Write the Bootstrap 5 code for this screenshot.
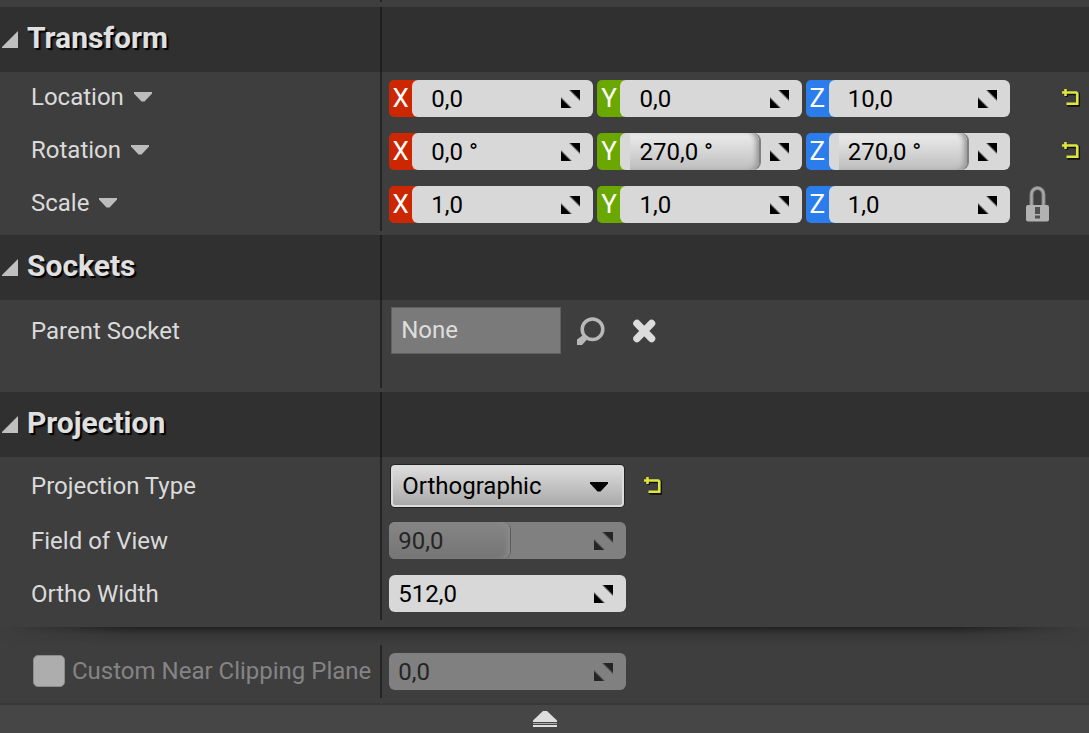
<!DOCTYPE html>
<html lang="en">
<head>
<meta charset="utf-8">
<meta name="viewport" content="width=device-width, initial-scale=1">
<title>Details</title>
<link href="https://cdn.jsdelivr.net/npm/bootstrap@5.3.0/dist/css/bootstrap.min.css" rel="stylesheet">
<style>
  body { background: #3e3e3e; color: #dadada; font-family: Roboto, sans-serif; font-size: 24px; line-height: 32px; }
  svg { display: block; }
  .strip { height: 7px; }
  .name-cell { flex: 0 0 35.1%; min-width: 0; border-right: 2px solid #242424; padding-left: 31px; white-space: nowrap; }
  .strip .name-cell { width: 35.1%; height: 2px; }
  .value-cell { flex: 1 1 0; min-width: 0; padding-left: 7px; }
  .prop { min-height: 53px; }
  .prop.tall { min-height: 88px; }
  .prop.combo { min-height: 57px; }
  .vector .name-cell { gap: 10px; padding-bottom: 3px; }
  .vector .name-cell button { color: #bcbcbc; }
  .group-head { background: #303030; height: 65px; }
  .group-head .name-cell { padding-left: 2px; border-color: #1f1f1f; }
  .group-head h2 { font-size: 30px; line-height: 40px; font-weight: 700; text-shadow: 2px 2px 1px #000; margin: 0 0 3px 9px; color: #e0e0e0; }
  .group-gap { padding-bottom: 4px; }
  .flat { background: none; border: 0; padding: 0; color: inherit; }

  .axis { flex: 1 1 0; min-width: 0; border-radius: 5px; color: #fff; }
  .axis > label { flex: 0 0 23px; line-height: 37px; font-size: 26px; text-align: center; }
  .axis-x { background: linear-gradient(to right, #cc2700 40px, transparent 40px); }
  .axis-y { background: linear-gradient(to right, #6aa700 40px, transparent 40px); }
  .axis-z { background: linear-gradient(to right, #2c7dec 40px, transparent 40px); }
  .spin { position: relative; height: 37px; background: #d8d8d8; border-radius: 6px; overflow: hidden; color: #000; }
  .axis .spin { flex: 1 1 0; min-width: 0; }
  .spin input { position: relative; width: 100%; height: 37px; background: none; border: 0; padding: 0 40px 0 9px; color: inherit; outline: 0; }
  .axis .spin input { padding-left: 19px; }
  .spin svg { position: absolute; right: 13px; top: 10px; }
  .spin-single { width: 237px; }
  .spin-off { background: #808080; color: #252525; }
  .track { position: absolute; inset: 0; }
  .axis .track { left: 10px; }
  .fill { height: 100%; border-radius: 0 8px 8px 0; background: linear-gradient(#ececec, #d8d8d8 45%, #bdbdbd); box-shadow: inset -5px 0 5px -2px #999, 2px 0 0 #808080; }
  .spin-off .fill { background: linear-gradient(#868686, #7e7e7e 45%, #757575); box-shadow: inset -5px 0 5px -2px #8a8a8a, 1px 0 0 #5c5c5c; }
  .side { flex: 0 0 79px; padding: 0 8px 2px 15px; }

  .socket-box { width: 170px; height: 47px; background: #7a7a7a; border: 1px solid #606060; border-radius: 0; padding: 0 9px 2px; color: #dedede; outline: 0; }
  .value-cell .socket-line { padding-left: 2px; }
  .socket-row { padding-top: 7px; }
  .socket-row.name-cell { padding-top: 15px; }
  .combo-box { position: relative; width: 233px; margin-left: 2px; }
  .combo-box select { appearance: none; width: 100%; height: 42px; padding: 0 40px 0 9px; color: #000; border: 2px solid #dcdcdc; border-radius: 4px; background: linear-gradient(#dcdcdc, #c6c6c6 45%, #a9a9a9); box-shadow: 0 0 0 1px #242424; outline: 0; }
  .combo-box svg { position: absolute; right: 16px; top: 17px; }
  .combo-reset { margin-left: 19px; }

  .advanced { padding-top: 18px; padding-bottom: 5px; position: relative; }
  .advanced::before { content: ""; position: absolute; inset: 0 0 auto 0; height: 18px; background: linear-gradient(#222, rgba(46,46,46,.5) 40%, rgba(62,62,62,0)); -webkit-mask-image: linear-gradient(to right, transparent, #000 12%, #000 88%, transparent); mask-image: linear-gradient(to right, transparent, #000 12%, #000 88%, transparent); }
  .advanced .name-cell { padding-bottom: 2px; }
  .check-off { appearance: none; width: 32px; height: 32px; background: #adadad; border: 1px solid #8c8c8c; border-radius: 5px; margin: 0 7px 0 2px; flex: none; }
  .label-off { color: #848484; }
  .foot { height: 30px; background: #464646; border: 0; border-top: 2px solid #383838; padding: 0; }
</style>
</head>
<body>
<svg width="0" height="0" class="position-absolute" aria-hidden="true">
  <symbol id="i-spin" viewBox="0 0 19 18"><path d="M8 0H19V11zM0 7V18H11z" fill="currentColor" opacity=".55"/><path d="M9.500 0H19V9.500zM0 8.500V18H9.500z" fill="currentColor"/></symbol>
  <symbol id="i-down" viewBox="0 0 18 10"><path d="M0 0H18V1.500L10.500 9.500H7.500L0 1.500z" fill="currentColor"/></symbol>
  <symbol id="i-open" viewBox="0 0 16 17"><path d="M16 0V17H0V16z" fill="#c0c0c0"/></symbol>
  <symbol id="i-reset" viewBox="0 0 20 20">
    <g fill="none"><path d="M2.500 6H17.800V17.500H6.500M5.700 2.500V9" stroke="#111" stroke-width="2.500"/>
    <path d="M1 4.500H15.300L16.300 5.500V15.700H5.500M4.500 1V8" stroke="#dfe63a" stroke-width="2.600"/></g>
  </symbol>
</svg>

<div class="strip"><div class="name-cell"></div></div>

<section class="group-gap">
  <div class="group-head d-flex">
    <div class="name-cell d-flex align-items-center">
      <button class="flat" aria-label="Collapse Transform"><svg width="16" height="17"><use href="#i-open"/></svg></button>
      <h2>Transform</h2>
    </div>
  </div>

  <div class="prop vector d-flex">
    <div class="name-cell d-flex align-items-center"><span>Location</span><button class="flat" aria-label="Location options"><svg width="18" height="10"><use href="#i-down"/></svg></button></div>
    <div class="value-cell d-flex align-items-center">
      <div class="d-flex gap-1 flex-grow-1">
        <div class="axis axis-x d-flex"><label for="lx">X</label><div class="spin"><input id="lx" type="text" value="0,0"><svg width="19" height="18"><use href="#i-spin"/></svg></div></div>
        <div class="axis axis-y d-flex"><label for="ly">Y</label><div class="spin"><input id="ly" type="text" value="0,0"><svg width="19" height="18"><use href="#i-spin"/></svg></div></div>
        <div class="axis axis-z d-flex"><label for="lz">Z</label><div class="spin"><input id="lz" type="text" value="10,0"><svg width="19" height="18"><use href="#i-spin"/></svg></div></div>
      </div>
      <div class="side d-flex justify-content-end"><button class="flat" aria-label="Reset location"><svg width="20" height="20"><use href="#i-reset"/></svg></button></div>
    </div>
  </div>

  <div class="prop vector d-flex">
    <div class="name-cell d-flex align-items-center"><span>Rotation</span><button class="flat" aria-label="Rotation options"><svg width="18" height="10"><use href="#i-down"/></svg></button></div>
    <div class="value-cell d-flex align-items-center">
      <div class="d-flex gap-1 flex-grow-1">
        <div class="axis axis-x d-flex"><label for="rx">X</label><div class="spin"><input id="rx" type="text" value="0,0 °"><svg width="19" height="18"><use href="#i-spin"/></svg></div></div>
        <div class="axis axis-y d-flex"><label for="ry">Y</label><div class="spin"><div class="track"><div class="fill" style="width:75%"></div></div><input id="ry" type="text" value="270,0 °"><svg width="19" height="18"><use href="#i-spin"/></svg></div></div>
        <div class="axis axis-z d-flex"><label for="rz">Z</label><div class="spin"><div class="track"><div class="fill" style="width:75%"></div></div><input id="rz" type="text" value="270,0 °"><svg width="19" height="18"><use href="#i-spin"/></svg></div></div>
      </div>
      <div class="side d-flex justify-content-end"><button class="flat" aria-label="Reset rotation"><svg width="20" height="20"><use href="#i-reset"/></svg></button></div>
    </div>
  </div>

  <div class="prop vector d-flex">
    <div class="name-cell d-flex align-items-center"><span>Scale</span><button class="flat" aria-label="Scale options"><svg width="18" height="10"><use href="#i-down"/></svg></button></div>
    <div class="value-cell d-flex align-items-center">
      <div class="d-flex gap-1 flex-grow-1">
        <div class="axis axis-x d-flex"><label for="sx">X</label><div class="spin"><input id="sx" type="text" value="1,0"><svg width="19" height="18"><use href="#i-spin"/></svg></div></div>
        <div class="axis axis-y d-flex"><label for="sy">Y</label><div class="spin"><input id="sy" type="text" value="1,0"><svg width="19" height="18"><use href="#i-spin"/></svg></div></div>
        <div class="axis axis-z d-flex"><label for="sz">Z</label><div class="spin"><input id="sz" type="text" value="1,0"><svg width="19" height="18"><use href="#i-spin"/></svg></div></div>
      </div>
      <div class="side d-flex"><button class="flat" aria-label="Lock scale ratio">
        <svg width="25" height="36" viewBox="0 0 25 36">
          <path d="M6.500 19V8.500a6 6.500 0 0 1 12 0V19" fill="none" stroke="#858585" stroke-width="4"/>
          <path d="M6.500 19V8.500a6 6.500 0 0 1 12 0V19" fill="none" stroke="#a8a8a8" stroke-width="2"/>
          <rect x="1" y="19" width="23" height="16.500" rx="2" fill="#b2b2b2"/>
          <path d="M10 21h5v7h-5zM10 29.500h5v3h-5z" fill="#505050"/>
        </svg></button></div>
    </div>
  </div>
</section>

<section class="group-gap">
  <div class="group-head d-flex">
    <div class="name-cell d-flex align-items-center">
      <button class="flat" aria-label="Collapse Sockets"><svg width="16" height="17"><use href="#i-open"/></svg></button>
      <h2>Sockets</h2>
    </div>
  </div>
  <div class="prop tall d-flex">
    <div class="name-cell socket-row"><label for="ps">Parent Socket</label></div>
    <div class="value-cell socket-row d-flex align-items-start">
      <div class="socket-line d-flex align-items-center">
        <input id="ps" class="socket-box" type="text" value="None" readonly>
        <button class="flat ms-3" aria-label="Browse sockets">
          <svg width="28" height="28" viewBox="0 0 28 28"><path d="M0 28V22.500L5.500 18.500 10 22.500 5 28z" fill="#b8b8b8"/><circle cx="15.500" cy="12.200" r="10.300" fill="none" stroke="#b8b8b8" stroke-width="3.500"/></svg>
        </button>
        <button class="flat ms-4" aria-label="Clear socket">
          <svg width="30" height="28" viewBox="0 0 30 28"><path d="M8 6.500L22.500 21.500M22.500 6.500L8 21.500" stroke="#dcdcdc" stroke-width="7.500" stroke-linecap="round"/></svg>
        </button>
      </div>
    </div>
  </div>
</section>

<section>
  <div class="group-head d-flex">
    <div class="name-cell d-flex align-items-center">
      <button class="flat" aria-label="Collapse Projection"><svg width="16" height="17"><use href="#i-open"/></svg></button>
      <h2>Projection</h2>
    </div>
  </div>
  <div class="prop combo d-flex">
    <div class="name-cell d-flex align-items-center"><label for="pt">Projection Type</label></div>
    <div class="value-cell d-flex align-items-center">
      <div class="combo-box"><select id="pt"><option>Orthographic</option><option>Perspective</option></select><svg width="18" height="10" color="#000"><use href="#i-down"/></svg></div>
      <button class="flat combo-reset" aria-label="Reset projection type"><svg width="20" height="20"><use href="#i-reset"/></svg></button>
    </div>
  </div>
  <div class="prop d-flex">
    <div class="name-cell d-flex align-items-center"><label for="fov">Field of View</label></div>
    <div class="value-cell d-flex align-items-center">
      <div class="spin spin-single spin-off"><div class="track"><div class="fill" style="width:51%"></div></div><input id="fov" type="text" value="90,0" disabled><svg width="19" height="18"><use href="#i-spin"/></svg></div>
    </div>
  </div>
  <div class="prop d-flex">
    <div class="name-cell d-flex align-items-center"><label for="ow">Ortho Width</label></div>
    <div class="value-cell d-flex align-items-center">
      <div class="spin spin-single"><input id="ow" type="text" value="512,0"><svg width="19" height="18"><use href="#i-spin"/></svg></div>
    </div>
  </div>
  <div class="strip"></div>
  <div class="advanced">
    <div class="prop d-flex">
      <div class="name-cell d-flex align-items-center"><input id="cn" class="check-off" type="checkbox" disabled><label for="cn" class="label-off">Custom Near Clipping Plane</label></div>
      <div class="value-cell d-flex align-items-center">
        <div class="spin spin-single spin-off"><input type="text" value="0,0" aria-label="Custom near clipping plane" disabled><svg width="19" height="18"><use href="#i-spin"/></svg></div>
      </div>
    </div>
  </div>
</section>

<button class="foot w-100 d-flex justify-content-center align-items-center" aria-label="Hide advanced">
  <svg width="24" height="16" viewBox="0 0 24 16"><path d="M0 11V9.500L10 0H14L24 9.500V11z" fill="#dedede"/><path d="M0 12h24v1H0z" fill="#aaa"/><path d="M0 14h24v2H0z" fill="#dedede"/></svg>
</button>
<script src="https://cdn.jsdelivr.net/npm/bootstrap@5.3.0/dist/js/bootstrap.bundle.min.js"></script>
</body>
</html>
